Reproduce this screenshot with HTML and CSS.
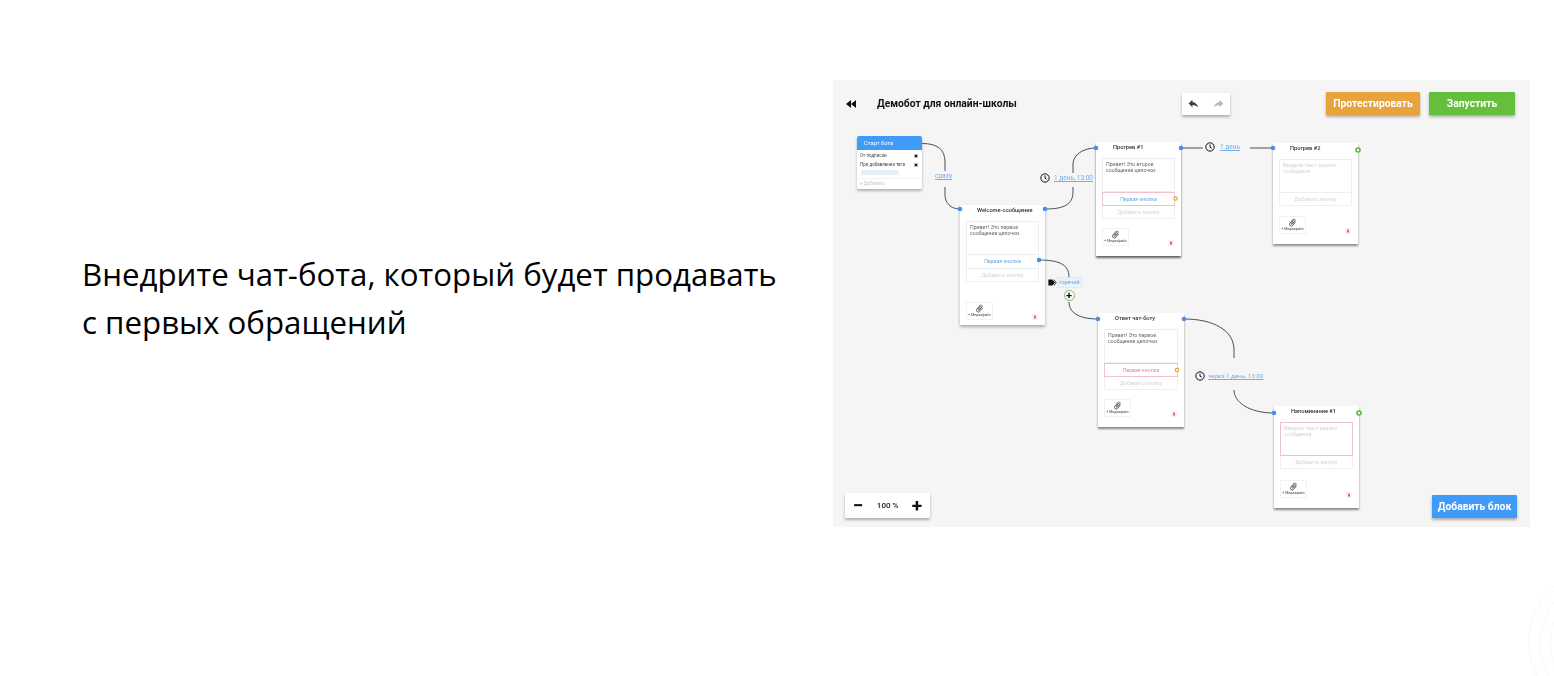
FILE: index.html
```html
<!DOCTYPE html>
<html lang="ru">
<head>
<meta charset="utf-8">
<title>Чат-бот</title>
<link rel="stylesheet" href="styles.css">
</head>
<body>
<svg class="defs" width="0" height="0" aria-hidden="true">
  <symbol id="clip" viewBox="0 0 24 24"><path d="M16.5 6v11.5a4 4 0 0 1-8 0V5a2.5 2.5 0 0 1 5 0v10.5a1 1 0 0 1-2 0V6H10v9.5a2.5 2.5 0 0 0 5 0V5a4 4 0 0 0-8 0v12.5a5.5 5.5 0 0 0 11 0V6z" transform="rotate(40 12 12)"/></symbol>
  <symbol id="trash" viewBox="0 0 24 24"><path d="M6 19c0 1.100.9 2 2 2h8a2 2 0 0 0 2-2V7H6zM19 4h-3.500l-1-1h-5l-1 1H5v2h14z"/></symbol>
  <symbol id="clock" viewBox="0 0 24 24"><circle cx="12" cy="12" r="10" fill="none" stroke="currentColor" stroke-width="2.400"/><path d="M12 6v6.500l4 2.500" fill="none" stroke="currentColor" stroke-width="2.400"/></symbol>
  <symbol id="cross" viewBox="0 0 10 10"><path d="M1.500 1.500l7 7M8.500 1.500l-7 7" stroke="currentColor" stroke-width="2.600"/></symbol>
</svg>

<main class="page">
  <h1 class="headline">Внедрите чат-бота, который будет продавать<br>с первых обращений</h1>

  <section class="editor">
    <svg class="links" viewBox="0 0 697 447" width="697" height="447" aria-hidden="true">
      <g class="link">
        <path d="M89 63.500C104 63.500 112 69 112 82V91"/>
        <path d="M112 107V115C112 122 117 129 127 129"/>
        <path d="M212 129C230 129 240 125 240 112V107"/>
        <path d="M240 93V84C240 75 250 68 263 68"/>
        <path d="M348 68H370"/>
        <path d="M417 68H440"/>
        <path d="M206 180C225 180 236 184 236 197"/>
        <path d="M236 222C236 232 245 239 265 239"/>
        <path d="M351 239C380 239 401 250 401 270V278"/>
        <path d="M401 310C401 322 416 333 441 333"/>
      </g>
      <g class="dots">
        <circle cx="127" cy="129" r="2.300"/><circle cx="212" cy="129" r="2.300"/>
        <circle cx="263" cy="68" r="2.300"/><circle cx="348" cy="68" r="2.300"/>
        <circle cx="440" cy="68" r="2.300"/><circle cx="206" cy="180" r="2.300"/>
        <circle cx="265" cy="239" r="2.300"/><circle cx="351" cy="239" r="2.300"/>
        <circle cx="441" cy="333" r="2.300"/>
      </g>
      <g class="ring-orange">
        <circle cx="342.500" cy="118.500" r="1.700"/><circle cx="344" cy="290" r="1.700"/>
      </g>
      <g class="ring-green">
        <circle cx="525" cy="70" r="2"/><circle cx="526" cy="333" r="2"/>
      </g>
    </svg>

    <header class="topbar">
      <svg class="back" viewBox="0 0 10 8" width="10" height="8" aria-hidden="true"><path d="M5 0v8L0 4zM10 0v8L5 4z"/></svg>
      <h2 class="bot-title">Демобот для онлайн-школы</h2>
      <div class="history">
        <svg class="hist-on" viewBox="0 0 24 24" width="13" height="13" aria-hidden="true"><path d="M10 9V5l-7 7 7 7v-4.100c5 0 8.500 1.600 11 5.100-1-5-4-10-11-11z"/></svg>
        <svg class="hist-off" viewBox="0 0 24 24" width="13" height="13" aria-hidden="true"><path d="M14 9V5l7 7-7 7v-4.100c-5 0-8.500 1.600-11 5.100 1-5 4-10 11-11z"/></svg>
      </div>
      <button class="btn btn-test">Протестировать</button>
      <button class="btn btn-run">Запустить</button>
    </header>

    <footer class="bottombar">
      <div class="zoom">
        <span class="zoom-sign">−</span>
        <span class="zoom-value">100 %</span>
        <span class="zoom-sign">+</span>
      </div>
      <button class="btn btn-add">Добавить блок</button>
    </footer>

    <article class="start">
      <div class="start-head">Старт бота</div>
      <div class="start-row"><span>От подписки</span><svg class="x" width="4" height="4"><use href="#cross"/></svg></div>
      <div class="start-row"><span>При добавлении тега</span><svg class="x" width="4" height="4"><use href="#cross"/></svg></div>
      <div class="start-tag"></div>
      <div class="start-add">+ Добавить</div>
    </article>

    <article class="card card-welcome">
      <div class="card-title">Welcome-сообщение</div>
      <div class="msg">Привет! Это первое сообщение цепочки.</div>
      <div class="choice">Первая кнопка</div>
      <div class="add-choice">Добавить кнопку</div>
      <div class="card-foot">
        <div class="media"><svg width="9" height="9"><use href="#clip"/></svg><span>+ Медиафайл</span></div>
        <svg class="trash" width="6" height="6"><use href="#trash"/></svg>
      </div>
    </article>

    <article class="card card-warm1">
      <div class="card-title">Прогрев #1</div>
      <div class="msg">Привет! Это второе сообщение цепочки.</div>
      <div class="choice choice-alert">Первая кнопка</div>
      <div class="add-choice">Добавить кнопку</div>
      <div class="card-foot">
        <div class="media"><svg width="9" height="9"><use href="#clip"/></svg><span>+ Медиафайл</span></div>
        <svg class="trash" width="6" height="6"><use href="#trash"/></svg>
      </div>
    </article>

    <article class="card card-warm2">
      <div class="card-title">Прогрев #2</div>
      <div class="msg msg-empty">Введите текст вашего сообщения</div>
      <div class="add-choice">Добавить кнопку</div>
      <div class="card-foot">
        <div class="media"><svg width="9" height="9"><use href="#clip"/></svg><span>+ Медиафайл</span></div>
        <svg class="trash" width="6" height="6"><use href="#trash"/></svg>
      </div>
    </article>

    <article class="card card-answer">
      <div class="card-title">Ответ чат-боту</div>
      <div class="msg">Привет! Это первое сообщение цепочки.</div>
      <div class="choice choice-alert choice-red">Первая кнопка</div>
      <div class="add-choice">Добавить кнопку</div>
      <div class="card-foot">
        <div class="media"><svg width="9" height="9"><use href="#clip"/></svg><span>+ Медиафайл</span></div>
        <svg class="trash" width="6" height="6"><use href="#trash"/></svg>
      </div>
    </article>

    <article class="card card-remind">
      <div class="card-title">Напоминание #1</div>
      <div class="msg msg-empty msg-alert">Введите текст вашего сообщения</div>
      <div class="add-choice">Добавить кнопку</div>
      <div class="card-foot">
        <div class="media"><svg width="9" height="9"><use href="#clip"/></svg><span>+ Медиафайл</span></div>
        <svg class="trash" width="6" height="6"><use href="#trash"/></svg>
      </div>
    </article>

    <a class="delay delay-now">сразу</a>
    <div class="delay delay-a"><svg width="10" height="10"><use href="#clock"/></svg><a>1 день, 13:00</a></div>
    <div class="delay delay-b"><svg width="10" height="10"><use href="#clock"/></svg><a>1 день</a></div>
    <div class="delay delay-c"><svg width="10" height="10"><use href="#clock"/></svg><a>через 1 день, 13:00</a></div>

    <div class="tag-wrap">
      <svg viewBox="0 0 24 24" width="9" height="9" aria-hidden="true"><path d="M1 4h10l8 8-7 8H1zM14 4h2l7 8-6 8h-2l6-8z"/></svg>
      <span class="tag">горячий</span>
    </div>
    <div class="plus">+</div>
  </section>
</main>

<svg class="corner" viewBox="1524 576 30 100" width="30" height="100" aria-hidden="true">
  <circle cx="1606" cy="643" r="77"/><circle cx="1606" cy="643" r="66"/><circle cx="1606" cy="643" r="56"/>
</svg>
</body>
</html>
```

FILE: styles.css
```css
* { box-sizing: border-box; }

html, body {
  margin: 0;
  height: 676px;
  overflow: hidden;
  background: #fff;
}

body {
  position: relative;
  font-family: Roboto, "Liberation Sans", sans-serif;
}

.defs { position: absolute; }

.page {
  display: flex;
  align-items: flex-start;
  padding: 80px 24px 0 82px;
}

.headline {
  width: 751px;
  flex: none;
  margin: 170px 0 0;
  font-family: "Open Sans", "Noto Sans", sans-serif;
  font-weight: 400;
  font-size: 31.250px;
  line-height: 48px;
  white-space: nowrap;
  color: #000;
}

.editor {
  position: relative;
  width: 697px;
  height: 447px;
  flex: none;
  display: flex;
  flex-direction: column;
  justify-content: space-between;
  background: #f5f5f5;
  filter: blur(0.45px);
}

.links {
  position: absolute;
  inset: 0;
  z-index: 1;
  pointer-events: none;
}
.link path { fill: none; stroke: #4a4f55; stroke-width: 1; }
.dots circle { fill: #4a90e2; }
.ring-orange circle { fill: #fff; stroke: #e8a33d; stroke-width: 1.200; }
.ring-green circle { fill: #fff; stroke: #62b53c; stroke-width: 1.600; }

.topbar {
  display: flex;
  align-items: center;
  height: 23px;
  margin: 12px 15px 0 13px;
}
.back { fill: #111; margin-right: 21px; }
.bot-title {
  margin: 0;
  width: 305px;
  font-size: 10.300px;
  font-weight: 700;
  color: #111;
}
.history {
  display: flex;
  justify-content: center;
  align-items: center;
  gap: 12px;
  width: 48px;
  height: 22px;
  margin-right: 96px;
  background: #fff;
  box-shadow: 0 2px 3px rgba(0, 0, 0, .3);
  border-radius: 1px;
}
.hist-on { fill: #3b4047; }
.hist-off { fill: #b5b8bb; }

.btn {
  height: 23px;
  padding: 0;
  border: 0;
  border-radius: 1px;
  font-family: inherit;
  font-size: 10.300px;
  font-weight: 700;
  color: #fff;
  box-shadow: 0 2px 3px rgba(0, 0, 0, .3);
}
.btn-test { width: 94px; margin-right: 9px; background: #e8a33d; }
.btn-run { width: 86px; background: #66bf3c; }
.btn-add { width: 85px; background: #3f9bf7; }

.bottombar {
  display: flex;
  justify-content: space-between;
  align-items: flex-end;
  margin: 0 13px 9px 12px;
}
.zoom {
  display: flex;
  align-items: center;
  justify-content: space-between;
  width: 85px;
  height: 25px;
  padding: 0 8px;
  background: #fff;
  box-shadow: 0 2px 3px rgba(0, 0, 0, .3);
  border-radius: 1px;
}
.zoom-sign { font-size: 19px; font-weight: 700; line-height: 1; color: #111; }
.zoom-value { font-size: 8px; font-weight: 500; color: #222; }

.start {
  position: absolute;
  left: 24px;
  top: 56px;
  width: 65px;
  height: 53px;
  background: #fff;
  border-radius: 2px;
  box-shadow: 0 2px 3px rgba(0, 0, 0, .28);
  font-size: 4.500px;
  color: #444;
}
.start-head {
  height: 14px;
  padding-left: 7px;
  background: #3f9bf7;
  border-radius: 2px 2px 0 0;
  color: #fff;
  font-size: 5.800px;
  line-height: 14px;
}
.start-row {
  display: flex;
  align-items: center;
  justify-content: space-between;
  height: 9px;
  padding: 0 4px 0 3px;
  line-height: 9px;
}
.start-row:nth-child(2) { margin-top: 1px; }
.x { color: #111; }
.start-tag {
  width: 38px;
  height: 5px;
  margin: 1px 0 3px 4px;
  background: #e4f0fb;
}
.start-add {
  padding: 2px 0 0 3px;
  border-top: 1px solid #f4f4f4;
  color: #c4c4c4;
}

.card {
  position: absolute;
  display: flex;
  flex-direction: column;
  width: 85px;
  padding: 0 6px 10px;
  background: #fff;
  box-shadow: 0 2px 3px rgba(0, 0, 0, .3);
  font-size: 5.200px;
}
.card-welcome { left: 127px; top: 125px; height: 120px; padding-bottom: 5px; }
.card-warm1 { left: 263px; top: 62px; height: 114px; box-shadow: 0 2px 2px rgba(0, 0, 0, .6); }
.card-warm2 { left: 440px; top: 63px; height: 101px; box-shadow: 0 2px 2px rgba(0, 0, 0, .42); }
.card-answer { left: 265px; top: 233px; width: 86px; height: 114px; box-shadow: 0 2px 2px rgba(0, 0, 0, .45); }
.card-remind { left: 441px; top: 326px; height: 102px; box-shadow: 0 2px 2px rgba(0, 0, 0, .45); }

.card-title {
  height: 16px;
  padding-left: 11px;
  font-size: 5.700px;
  font-weight: 500;
  line-height: 11px;
  color: #333;
  white-space: nowrap;
}
.msg {
  height: 34px;
  padding: 2px 3px;
  border: 1px solid #eceff2;
  font-size: 5.200px;
  line-height: 6.300px;
  color: #666;
}
.msg-empty { color: #d4d4d4; }
.msg-alert { border-color: #e9c3c8; }
.choice {
  height: 14px;
  border: 1px solid #e6eef6;
  border-top-width: 0;
  text-align: center;
  line-height: 13px;
  color: #6ba5e4;
}
.choice-alert { border: 1px solid #ecc4c9; }
.choice-red { color: #e28a99; }
.add-choice {
  height: 13px;
  border: 1px solid #f0f0f0;
  border-top-width: 0;
  text-align: center;
  line-height: 12px;
  color: #d4d4d4;
}
.card-foot {
  display: flex;
  justify-content: space-between;
  align-items: flex-end;
  margin-top: auto;
  padding-right: 1px;
}
.media {
  display: flex;
  flex-direction: column;
  align-items: center;
  justify-content: center;
  width: 27px;
  height: 18px;
  border: 1px solid #f2f2f2;
  font-size: 3.500px;
  line-height: 5px;
  color: #444;
}
.media svg { fill: #333; }
.trash {
  fill: #e0566b;
  padding: 1px;
  background: #fdeef0;
}

.delay {
  position: absolute;
  display: flex;
  align-items: center;
  gap: 4px;
  font-size: 6.500px;
  color: #72afea;
  text-decoration: underline;
}
.delay svg { color: #111; flex: none; }
.delay a { text-decoration: underline; }
.delay-now { left: 102px; top: 92px; }
.delay-a { left: 207px; top: 93px; }
.delay-b { left: 372px; top: 62px; gap: 5px; }
.delay-c { left: 362px; top: 291px; gap: 3px; font-size: 6.200px; }

.tag-wrap {
  position: absolute;
  left: 215px;
  top: 197px;
  display: flex;
  align-items: center;
}
.tag-wrap svg { fill: #111; }
.tag {
  width: 25px;
  height: 11px;
  background: #e9f3fc;
  border: 1px solid #deebf8;
  text-align: center;
  font-size: 5.400px;
  line-height: 9px;
  color: #6ba5e4;
}
.plus {
  position: absolute;
  left: 230.500px;
  top: 210px;
  width: 11px;
  height: 11px;
  border: 1px solid #7fb65d;
  border-radius: 50%;
  background: #fff;
  text-align: center;
  font-size: 11px;
  font-weight: 700;
  line-height: 9px;
  color: #111;
}

.corner {
  position: absolute;
  right: 0;
  top: 576px;
  fill: none;
  stroke: #f2faf8;
  stroke-width: 1;
}
```
